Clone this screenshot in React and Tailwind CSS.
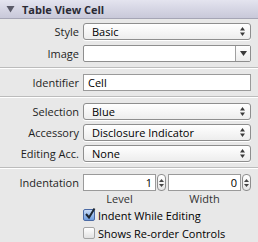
import React from "react";

const font = { fontFamily: '"Open Sans", "Noto Sans", sans-serif' };

function UpDown() {
  return (
    <svg width="7" height="11" viewBox="0 0 7 11" className="shrink-0">
      <path d="M3.5 1 L6 4.5 L1 4.5 Z" fill="#3a3a3a" />
      <path d="M3.5 10 L6 6.5 L1 6.5 Z" fill="#3a3a3a" />
    </svg>
  );
}

function Popup({ value }) {
  return (
    <div className="flex-1 h-[17px] flex items-center justify-between pl-[8px] pr-[4px] rounded-[3px] border border-[#8e8e8e] bg-gradient-to-b from-[#ffffff] to-[#ededed] shadow-[0_1px_0_#ffffff] text-[11px] text-black leading-none">
      <span>{value}</span>
      <UpDown />
    </div>
  );
}

function Label({ children }) {
  return (
    <div className="w-[83px] shrink-0 text-right pr-[4px] text-[11px] text-[#1e1e1e] leading-none">
      {children}
    </div>
  );
}

function Sep() {
  return <div className="h-[2px] border-t border-[#bcbcbc] border-b-white border-b" />;
}

function Stepper() {
  return (
    <div className="w-[9px] h-[17px] ml-[1px] rounded-[4px] border border-[#8e8e8e] bg-gradient-to-b from-white to-[#e6e6e6] flex flex-col items-center justify-center gap-[2px]">
      <svg width="5" height="3" viewBox="0 0 5 3"><path d="M2.5 0 L5 3 L0 3 Z" fill="#444" /></svg>
      <svg width="5" height="3" viewBox="0 0 5 3"><path d="M2.5 3 L5 0 L0 0 Z" fill="#444" /></svg>
    </div>
  );
}

function Check({ checked }) {
  return checked ? (
    <div className="w-[12px] h-[12px] rounded-[2px] border border-[#4a6aa5] bg-gradient-to-b from-[#c9dcf7] to-[#6e9de0] relative">
      <svg width="14" height="14" viewBox="0 0 14 14" className="absolute left-[-1px] top-[-3px]">
        <path d="M3 7 L6 10.5 L11.5 1.5" stroke="#1d2733" strokeWidth="2" fill="none" />
      </svg>
    </div>
  ) : (
    <div className="w-[12px] h-[12px] rounded-[2px] border border-[#a5a5a5] bg-gradient-to-b from-white to-[#e2e2e2]" />
  );
}

export default function App() {
  return (
    <div style={font} className="w-[258px] h-[242px] bg-[#e8e8e8] overflow-hidden">
      <div className="h-[19px] flex items-center bg-gradient-to-b from-[#e4e4ef] to-[#c8c8d9] border-b border-[#a5a5b5]">
        <svg width="9" height="8" viewBox="0 0 9 8" className="ml-[6px] mr-[7px]">
          <path d="M0.5 1 L8.5 1 L4.5 7.5 Z" fill="#5a5a68" />
        </svg>
        <span className="text-[11px] font-bold text-[#2a2a35] leading-none">Table View Cell</span>
      </div>

      <div className="flex flex-col pr-[7px]">
        <div className="flex items-center mt-[4px] h-[17px]">
          <Label>Style</Label>
          <Popup value="Basic" />
        </div>
        <div className="flex items-center mt-[5px] h-[17px]">
          <Label>Image</Label>
          <div className="flex-1 h-[17px] flex rounded-[2px] border border-[#8e8e8e] bg-white">
            <div className="flex-1" />
            <div className="w-[15px] border-l border-[#a0a0a0] bg-gradient-to-b from-white to-[#ececec] flex items-center justify-center">
              <svg width="7" height="5" viewBox="0 0 7 5"><path d="M0 0 L7 0 L3.5 5 Z" fill="#3a3a3a" /></svg>
            </div>
          </div>
        </div>
      </div>

      <div className="mt-[5px]"><Sep /></div>

      <div className="flex items-center mt-[5px] h-[17px] pr-[7px]">
        <Label>Identifier</Label>
        <div className="flex-1 h-[17px] flex items-center pl-[4px] border border-[#9a9a9a] bg-white text-[11px] leading-none text-black">Cell</div>
      </div>

      <div className="mt-[5px]"><Sep /></div>

      <div className="flex flex-col pr-[7px]">
        <div className="flex items-center mt-[5px] h-[17px]">
          <Label>Selection</Label>
          <Popup value="Blue" />
        </div>
        <div className="flex items-center mt-[4px] h-[17px]">
          <Label>Accessory</Label>
          <Popup value="Disclosure Indicator" />
        </div>
        <div className="flex items-center mt-[4px] h-[17px]">
          <Label>Editing Acc.</Label>
          <Popup value="None" />
        </div>
      </div>

      <div className="mt-[5px]"><Sep /></div>

      <div className="flex items-center mt-[5px] h-[17px] pr-[7px]">
        <Label>Indentation</Label>
        <div className="flex flex-1 items-center gap-[2px]">
          <div className="flex flex-1 items-center">
            <div className="flex-1 h-[17px] border border-[#9a9a9a] bg-white text-[11px] leading-none flex items-center justify-end pr-[3px]">1</div>
            <Stepper />
          </div>
          <div className="flex flex-1 items-center">
            <div className="flex-1 h-[17px] border border-[#9a9a9a] bg-white text-[11px] leading-none flex items-center justify-end pr-[3px]">0</div>
            <Stepper />
          </div>
        </div>
      </div>
      <div className="flex mt-[2px] pr-[7px] text-[11px] leading-none text-[#333]">
        <div className="w-[83px] shrink-0" />
        <div className="flex flex-1 gap-[2px]">
          <div className="flex-1 text-center pr-[10px]">Level</div>
          <div className="flex-1 text-center pr-[10px]">Width</div>
        </div>
      </div>

      <div className="flex items-center mt-[5px] pl-[83px] gap-[3px] text-[11px] leading-none text-black">
        <Check checked />
        <span>Indent While Editing</span>
      </div>
      <div className="flex items-center mt-[6px] pl-[83px] gap-[3px] text-[11px] leading-none text-black">
        <Check />
        <span>Shows Re-order Controls</span>
      </div>
    </div>
  );
}
